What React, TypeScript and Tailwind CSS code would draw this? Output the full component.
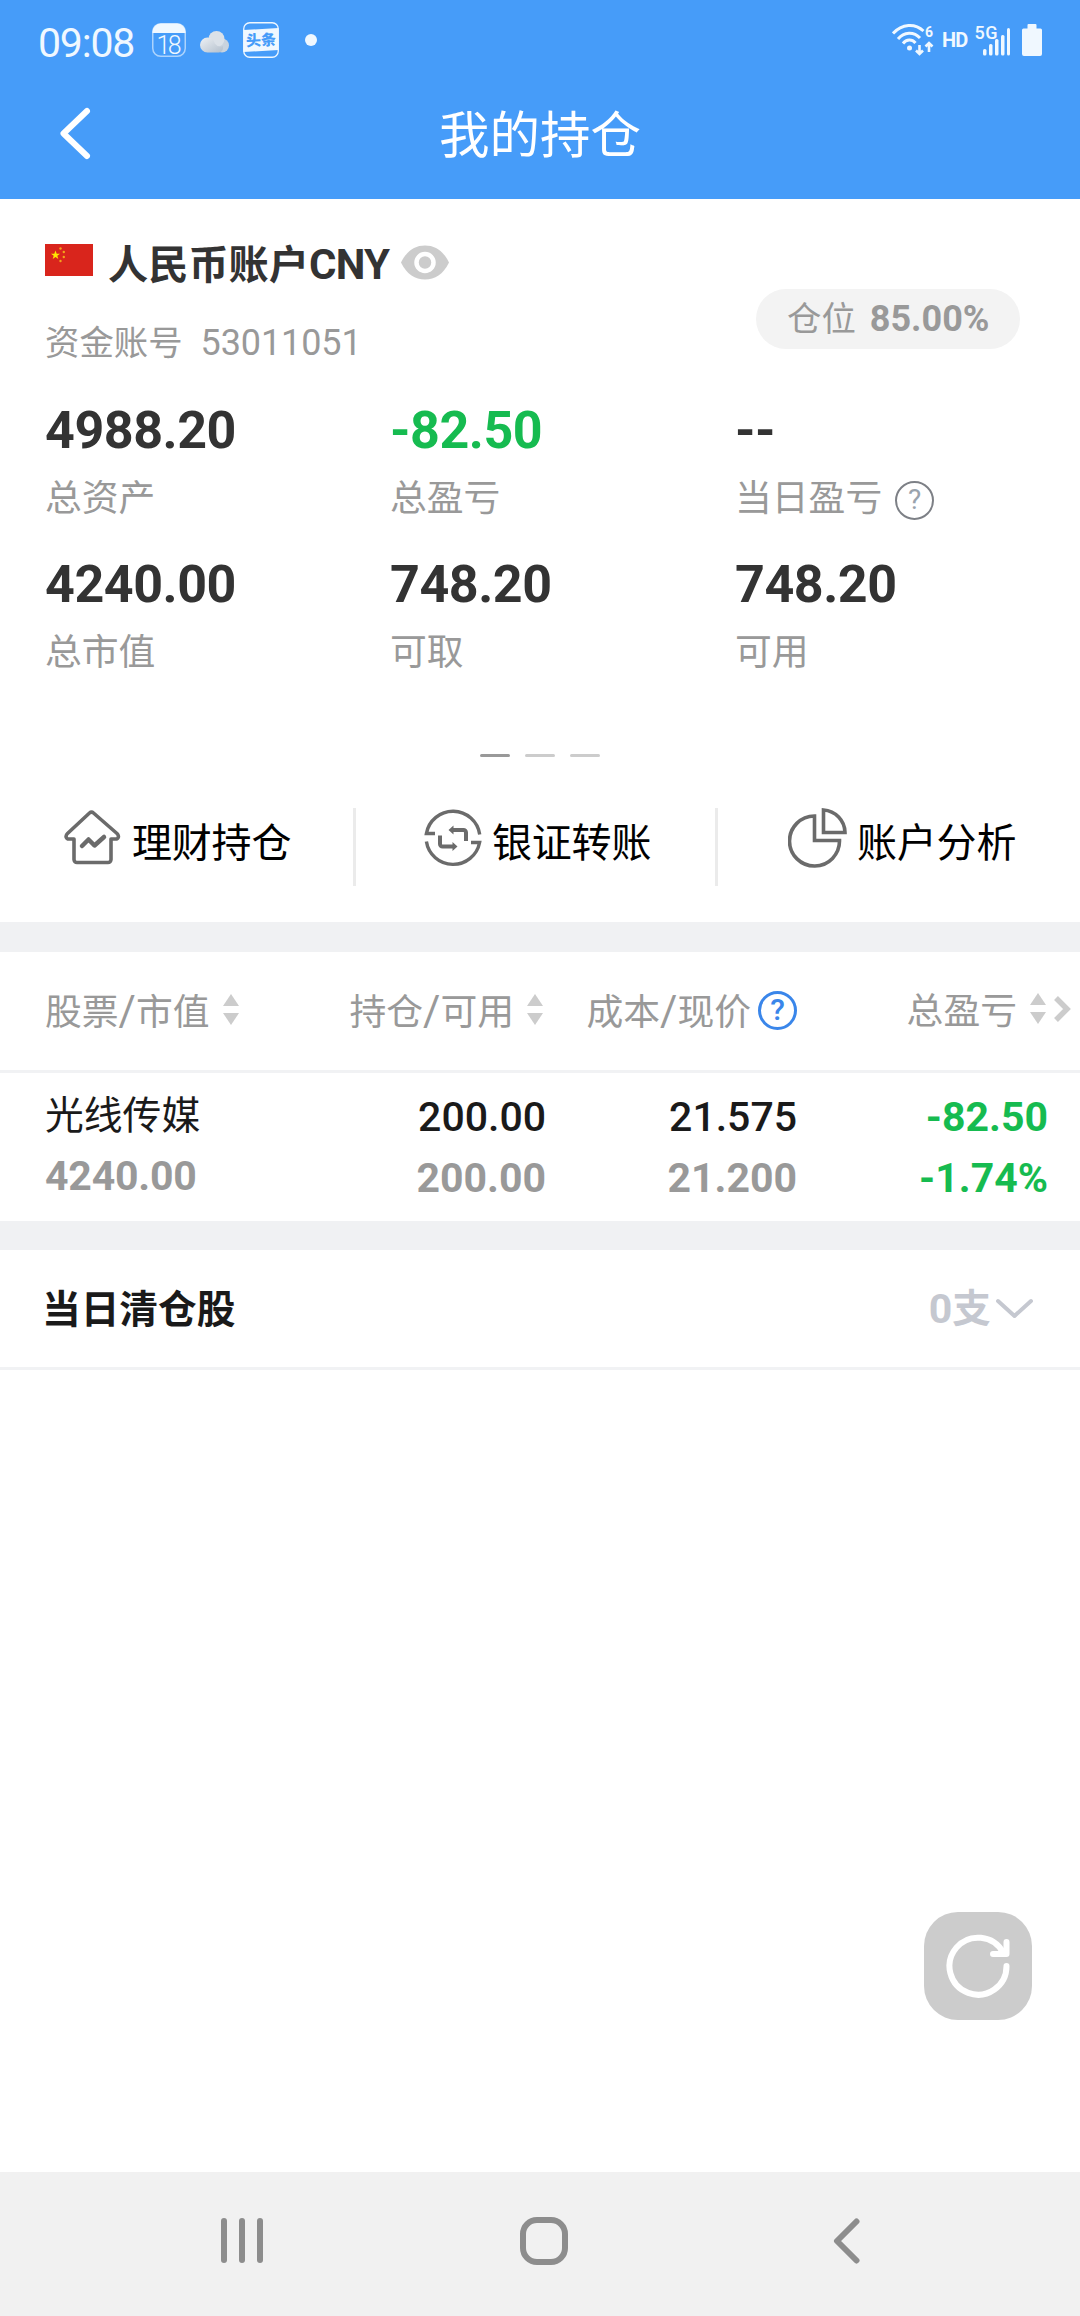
import type { ReactNode } from 'react';

interface Metric {
  id: number;
  value: string;
  label: string;
  color: string;
  help?: boolean;
}

interface Holding {
  id: number;
  name: string;
  marketValue: string;
  amount: string;
  available: string;
  cost: string;
  price: string;
  profit: string;
  profitRate: string;
}

const metrics: Metric[] = [
  { id: 1, value: '4988.20', label: '总资产', color: 'text-[#333]' },
  { id: 2, value: '-82.50', label: '总盈亏', color: 'text-[#16bb50]' },
  { id: 3, value: '--', label: '当日盈亏', color: 'text-[#333]', help: true },
  { id: 4, value: '4240.00', label: '总市值', color: 'text-[#333]' },
  { id: 5, value: '748.20', label: '可取', color: 'text-[#333]' },
  { id: 6, value: '748.20', label: '可用', color: 'text-[#333]' },
];

const holdings: Holding[] = [
  {
    id: 1,
    name: '光线传媒',
    marketValue: '4240.00',
    amount: '200.00',
    available: '200.00',
    cost: '21.575',
    price: '21.200',
    profit: '-82.50',
    profitRate: '-1.74%',
  },
];

const StatusBar = () => (
  <div className="flex h-[68px] items-center pt-3 pl-[38px] text-[#f0f8ff]">
    <span className="w-[101px] pt-1.5 text-[41px] leading-none tracking-[-1.2px]">09:08</span>

    {/* calendar */}
    <svg className="ml-[13px] h-[34px] w-[34px] overflow-visible" viewBox="0 0 34 34" fill="none">
      <rect x="0.75" y="0.75" width="32.5" height="32.5" rx="8" stroke="currentColor" strokeOpacity="0.6" strokeWidth="1.5" />
      <path d="M0.5 10V9A8.5 8.5 0 0 1 9 0.5H25A8.5 8.5 0 0 1 33.500 9V10Z" fill="currentColor" />
      <text x="17" y="31" textAnchor="middle" fontSize="25" fontWeight="300" fontFamily="Roboto, sans-serif" fill="currentColor" textLength="25">
        18
      </text>
    </svg>

    {/* weather */}
    <svg className="mt-1 ml-[14px] h-[22px] w-[29px]" viewBox="0 0 29 22">
      <defs>
        <linearGradient id="cloud" x1="0" y1="0" x2="1" y2="1">
          <stop offset="0" stopColor="#eef1f5" />
          <stop offset="1" stopColor="#b3bfcc" />
        </linearGradient>
      </defs>
      <circle cx="22" cy="14.500" r="7" fill="#c9d3de" />
      <circle cx="16.500" cy="8" r="8" fill="#dbe1e8" />
      <path d="M7.500 6.500a7.500 7.500 0 0 1 7.300 6 7 7 0 0 0 8 2.500c1 3-1 6.500-4 6.500H7.500a7.500 7.500 0 0 1 0-15Z" fill="url(#cloud)" />
    </svg>

    {/* news */}
    <svg className="ml-[14px] h-9 w-9" viewBox="0 0 36 36" fill="none">
      <rect x="0.75" y="0.75" width="34.5" height="34.5" rx="6" stroke="currentColor" strokeWidth="1.3" />
      <path d="M0.500 8L35.500 6V28L0.500 30Z" fill="currentColor" />
      <text x="18" y="23.500" textAnchor="middle" fontSize="15" fontWeight="900" fontFamily="'Noto Sans CJK SC', sans-serif" fill="#469cf9" transform="rotate(-3 18 18)">
        头条
      </text>
    </svg>

    <span className="ml-[26px] h-3 w-3 rounded-full bg-[#f0f8ff]" />

    {/* wifi */}
    <svg className="ml-auto h-[34px] w-[42px]" viewBox="0 0 42 34" fill="none" stroke="currentColor" strokeWidth="3">
      <path d="M1 10.500C10 0.500 23 0 31.500 8" />
      <path d="M6 16C12 8.500 22 8.500 28 15" />
      <path d="M11 20.500C14.500 16 20 16 23.500 20" />
      <circle cx="17.500" cy="25" r="2.500" fill="currentColor" stroke="none" />
      <path d="M27.500 22V31M24 27.500L27.500 31L31 27.500M37 29V20M33.500 23.500L37 20L40.500 23.500" strokeWidth="2.600" />
      <text x="33" y="14" fontSize="14" fontWeight="700" fontFamily="Roboto, sans-serif" fill="currentColor" stroke="none">
        6
      </text>
    </svg>
    <span className="ml-[8px] w-[27px] text-[20px] leading-none font-bold tracking-[-0.8px]">HD</span>
    <svg className="ml-[6px] h-8 w-9 overflow-visible" viewBox="0 0 36 32" fill="currentColor">
      <text x="-0.500" y="15" fontSize="18" fontWeight="500" fontFamily="Roboto, sans-serif" textLength="23">
        5G
      </text>
      <rect x="8" y="25" width="3.500" height="6.500" rx="1.500" />
      <rect x="14" y="20" width="3.500" height="11.500" rx="1.500" />
      <rect x="20" y="15" width="3.500" height="16.500" rx="1.500" />
      <rect x="26" y="11" width="3.500" height="20.500" rx="1.500" />
      <rect x="32" y="4" width="3" height="27.500" rx="1.500" />
    </svg>
    <svg className="mr-[38px] ml-[11px] h-8 w-5" viewBox="0 0 20 32" fill="currentColor">
      <path d="M5.500 1a1 1 0 0 1 1-1h7a1 1 0 0 1 1 1v3.500H18.500a1.500 1.500 0 0 1 1.500 1.500V30a2 2 0 0 1-2 2H2a2 2 0 0 1-2-2V6a1.500 1.500 0 0 1 1.500-1.500H5.500Z" />
    </svg>
  </div>
);

const ChinaFlag = () => (
  <svg className="mb-[10px] h-8 w-12" viewBox="0 0 48 32">
    <rect width="48" height="32" fill="#d9251c" />
    <path d="M10.500 6.500l1.200 3.200h3.300l-2.700 2 1 3.300-2.800-2-2.800 2 1-3.300-2.700-2h3.300z" fill="#ffe600" />
    <g fill="#f2a51b">
      <circle cx="15.500" cy="4.500" r="1.200" />
      <circle cx="18.800" cy="8" r="1.200" />
      <circle cx="18.800" cy="13" r="1.200" />
      <circle cx="15.500" cy="17" r="1.200" />
    </g>
  </svg>
);

const EyeIcon = () => (
  <svg className="mb-1.5 ml-3 h-[35px] w-12" viewBox="0 0 48 34">
    <path d="M0 17C6 5 14 0 24 0s18 5 24 17C42 29 34 34 24 34S6 29 0 17Z" fill="#ccc" />
    <circle cx="24" cy="17" r="8.500" fill="#ccc" stroke="#fff" strokeWidth="4.500" />
  </svg>
);

const SortIcon = ({ className = '' }: { className?: string }) => (
  <svg className={`h-[31px] w-4 shrink-0 ${className}`} viewBox="0 0 16 31" fill="#ccc">
    <path d="M8 0L16 12H0Z" />
    <path d="M8 31L0 19H16Z" />
  </svg>
);

const HouseIcon = () => (
  <svg className="h-[60px] w-[58px]" viewBox="0 0 58 60" fill="none" stroke="#6b6b6b" strokeWidth="3.600" strokeLinejoin="round" strokeLinecap="round">
    <path d="M25.500 5a3 3 0 0 1 4 0L53 25.500c2.500 2.500 1.500 5.500-1.500 5.500H47V51.500a3 3 0 0 1-3 3H13a3 3 0 0 1-3-3V31H5c-3 0-4-3-1.500-5.500Z" />
    <path d="M18 38L24.500 31.500L30.500 37.500L40 29" strokeWidth="4.500" />
  </svg>
);

const TransferIcon = () => (
  <svg className="h-[60px] w-[58px]" viewBox="0 0 58 60" fill="none" stroke="#6b6b6b" strokeWidth="3.400">
    <path d="M11 25.500H2.400A27 27 0 0 1 55.700 26.500" />
    <path d="M47 34.500H55.600A27 27 0 0 1 2.400 33.500" />
    <path d="M16 27.500V36a2.500 2.500 0 0 0 2.500 2.500H29M42 33V24.500a2.500 2.500 0 0 0-2.500-2.500H28.500" strokeWidth="4" />
    <path d="M29.500 17.500V26.500L24.500 22ZM28.500 34V43L33.500 38.500Z" fill="#6b6b6b" stroke="none" />
  </svg>
);

const PieIcon = () => (
  <svg className="h-[60px] w-[59px]" viewBox="0 0 59 60" fill="none" stroke="#6b6b6b" strokeWidth="3.600">
    <path d="M26.500 8A25 25 0 1 0 51.500 32.500H26.500Z" />
    <path d="M35.500 2A23 23 0 0 1 57 24.500H35.500Z" />
  </svg>
);

const Action = ({ icon, label, className }: { icon: ReactNode; label: string; className: string }) => (
  <div className={`flex items-start ${className}`}>
    {icon}
    <span className="mt-4 ml-[10px] text-[40px] leading-[40px] tracking-[-0.2px] text-black">{label}</span>
  </div>
);

const ColumnTitle = ({ left, right }: { left: string; right: string }) => (
  <span className="whitespace-nowrap">
    {left}
    <span className="text-[42px] leading-none">/</span>
    {right}
  </span>
);

const App = () => {
  return (
    <div className="relative flex h-[2316px] w-[1080px] flex-col overflow-hidden bg-white font-['Roboto','Noto_Sans_CJK_SC',sans-serif]">
      <header className="h-[199px] bg-[#469cf9]">
        <StatusBar />
        <div className="flex h-[131px] items-center justify-between px-[58px]">
          <svg className="h-14 w-9" viewBox="0 0 36 56" fill="none" stroke="#fff" strokeWidth="6" strokeLinecap="round" strokeLinejoin="round">
            <path d="M29 5L5.500 27.500L29 50" />
          </svg>
          <h1 className="pt-[5px] text-[50.500px] leading-none text-white">我的持仓</h1>
          <span className="w-9" />
        </div>
      </header>

      {/* account summary */}
      <section className="pl-[45px]">
        <div className="flex justify-between pt-[43px] pr-[60px]">
          <div>
            <div className="flex h-[46px] items-center">
              <ChinaFlag />
              <span className="ml-[15px] pt-px text-[42px] leading-none font-bold text-[#333]">
                <span className="text-[40.2px]">人民币账户</span>
                <span className="tracking-[-0.7px]">CNY</span>
              </span>
              <EyeIcon />
            </div>
            <div className="mt-[33px] flex h-11 items-center text-[36px] leading-none text-[#999]">
              <span className="text-[34.4px]">资金账号</span>
              <span className="ml-[18px] tracking-[-0.1px]">53011051</span>
            </div>
          </div>
          <div className="mt-[47px] flex h-[60px] w-[264px] items-center rounded-full bg-[#f3f3f3] pl-[31px] text-[#999]">
            <span className="text-[34.4px] leading-none">仓位</span>
            <span className="ml-[14px] text-[36px] leading-none font-bold">85.00%</span>
          </div>
        </div>

        <div className="mt-[35px] grid grid-cols-[345px_345px_1fr] gap-y-[33px]">
          {metrics.map((m) => (
            <div key={m.id}>
              <div className={`h-[60px] text-[52px] leading-[62px] font-bold tracking-[-0.45px] ${m.color}`}>{m.value}</div>
              <div className="mt-[17px] flex h-11 items-center text-[36.8px] leading-[44px] text-[#999]">
                {m.label}
                {m.help && (
                  <span className="mt-0.5 ml-[13px] flex h-[39px] w-[39px] items-center justify-center rounded-full border-2 border-[#7d8086] text-[28px] leading-none text-[#9aa3ad]">
                    ?
                  </span>
                )}
              </div>
            </div>
          ))}
        </div>
      </section>

      <div className="mt-[79px] flex justify-center gap-[15px]">
        <span className="h-[3px] w-[30px] rounded-sm bg-[#999]" />
        <span className="h-[3px] w-[30px] rounded-sm bg-[#ccc]" />
        <span className="h-[3px] w-[30px] rounded-sm bg-[#ccc]" />
      </div>

      <div className="mt-[51px] mb-9 flex h-[78px]">
        <Action className="w-[353px] pl-16" icon={<HouseIcon />} label="理财持仓" />
        <div className="w-[3px] bg-[#ebebeb]" />
        <Action className="w-[359px] pl-[68px]" icon={<TransferIcon />} label="银证转账" />
        <div className="w-[3px] bg-[#ebebeb]" />
        <Action className="w-[362px] pl-[70px]" icon={<PieIcon />} label="账户分析" />
      </div>

      <div className="h-[30px] bg-[#f0f1f3]" />

      {/* holdings table */}
      <div className="flex h-[121px] items-center border-b-[3px] border-[#f1f2f4] text-[36.800px] leading-none text-[#999]">
        <div className="flex w-[300px] items-center pl-[45px]">
          <ColumnTitle left="股票" right="市值" />
          <SortIcon className="mb-1 ml-[13px]" />
        </div>
        <div className="flex w-[245px] items-center justify-end">
          <ColumnTitle left="持仓" right="可用" />
          <SortIcon className="mr-0.5 mb-1 ml-[13px]" />
        </div>
        <div className="flex w-[252px] items-center justify-end">
          <ColumnTitle left="成本" right="现价" />
          <span className="mb-0.5 ml-[7px] flex h-[39px] w-[39px] items-center justify-center rounded-full border-[3px] border-[#3a86ea] text-[30px] font-medium text-[#3a86ea]">
            ?
          </span>
        </div>
        <div className="flex flex-1 items-center justify-end pr-[9px]">
          <span className="pt-0.5">总盈亏</span>
          <SortIcon className="mb-1 ml-[13px]" />
          <svg className="mb-1 ml-2 h-[26px] w-[17px]" viewBox="0 0 17 26" fill="none" stroke="#ccc" strokeWidth="5.500">
            <path d="M2 2L13 13L2 24" />
          </svg>
        </div>
      </div>

      {holdings.map((h) => (
        <div key={h.id} className="flex h-[148px] pt-[14px] text-[41px] leading-[61px]">
          <div className="w-[300px] pl-[45px]">
            <div className="-mt-0.5 h-[61px] text-[38.800px] text-[#1a1a1a]">{h.name}</div>
            <div className="font-bold tracking-[-0.2px] text-[#999]">{h.marketValue}</div>
          </div>
          <div className="w-[246px] text-right">
            <div className="font-medium text-[#1a1a1a]">{h.amount}</div>
            <div className="font-bold text-[#999]">{h.available}</div>
          </div>
          <div className="w-[251px] text-right">
            <div className="font-medium text-[#1a1a1a]">{h.cost}</div>
            <div className="font-bold text-[#999]">{h.price}</div>
          </div>
          <div className="flex-1 pr-8 text-right font-bold text-[#16bb50]">
            <div>{h.profit}</div>
            <div>{h.profitRate}</div>
          </div>
        </div>
      ))}

      <div className="h-[29px] bg-[#f0f1f3]" />

      {/* positions closed today */}
      <div className="flex h-[120px] items-center justify-between border-b-[3px] border-[#f1f2f4] pr-[46px] pl-[42px] text-[38.700px] leading-none font-bold">
        <span className="pt-[3px] text-[#1a1a1a]">当日清仓股</span>
        <span className="flex items-center text-[#c5c8d0]">
          <span className="pt-0.5 text-[41px]">0</span>
          <span className="pt-0.5">支</span>
          <svg className="ml-1 h-[22px] w-[39px]" viewBox="0 0 39 22" fill="none" stroke="currentColor" strokeWidth="4" strokeLinecap="round" strokeLinejoin="round">
            <path d="M3 3L19.500 18L36 3" />
          </svg>
        </span>
      </div>

      <button className="absolute top-[1912px] right-12 flex h-[108px] w-[108px] items-center justify-center rounded-[34px] bg-[#ccc]" aria-label="刷新">
        <svg className="h-[68px] w-[68px]" viewBox="0 0 68 68" fill="none" stroke="#fff" strokeWidth="6" strokeLinecap="round" strokeLinejoin="round">
          <path d="M62.500 34A28.500 28.500 0 1 1 59 20.500" />
          <path d="M62.500 10V22H49" />
        </svg>
      </button>

      {/* system navigation */}
      <nav className="mt-auto flex h-36 items-center justify-between bg-[#f1f1f1] pr-[219px] pl-[221px]">
        <div className="mt-[-7px] flex gap-3">
          <span className="h-[45px] w-1.5 rounded-full bg-[#8d8d8d]" />
          <span className="h-[45px] w-1.5 rounded-full bg-[#8d8d8d]" />
          <span className="h-[45px] w-1.5 rounded-full bg-[#8d8d8d]" />
        </div>
        <span className="mt-[-6px] mr-2 h-12 w-12 rounded-[17px] border-[6px] border-[#8d8d8d]" />
        <svg className="mt-[-7px] h-[46px] w-7" viewBox="0 0 28 46" fill="none" stroke="#8d8d8d" strokeWidth="6" strokeLinecap="round" strokeLinejoin="round">
          <path d="M23.500 3.500L4 23L23.500 42.500" />
        </svg>
      </nav>
    </div>
  );
};

export default App;
